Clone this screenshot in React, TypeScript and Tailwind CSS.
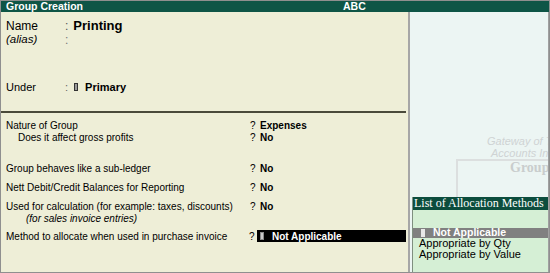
import React from 'react';

const Cursor: React.FC<{ className?: string }> = ({ className = '' }) => (
  <span className={`inline-block w-[4px] h-[8px] ${className}`} />
);

const rows = [
  { label: 'Group behaves like a sub-ledger', value: 'No', mt: 'mt-[19px]' },
  { label: 'Nett Debit/Credit Balances for Reporting', value: 'No', mt: 'mt-[7px]' },
];

const App: React.FC = () => {
  return (
    <div className="w-[550px] h-[273px] border border-[#8f8f8f] flex flex-col font-['Liberation_Sans',Arial,sans-serif] text-black overflow-hidden">
      {/* Title bar */}
      <div className="h-[11px] bg-[#0e5546] flex items-center text-white font-bold text-[10.5px] leading-[11px]">
        <span className="w-[342px] pl-[5px]">Group Creation</span>
        <span>ABC</span>
      </div>

      <div className="flex-1 flex min-h-0">
        {/* Left panel */}
        <div className="w-[407px] bg-[#eeeed7] flex flex-col">
          {/* Name */}
          <div className="mt-[7px] h-[13px] flex items-center pl-[5px]">
            <span className="w-[59px] text-[12px]">Name</span>
            <span className="text-[12px] text-[#555]">:</span>
            <span className="ml-[5px] text-[13px] font-bold">Printing</span>
          </div>
          <div className="mt-[2px] h-[12px] flex items-center pl-[5px]">
            <span className="w-[59px] text-[11.5px] italic">(alias)</span>
            <span className="text-[12px] text-[#777]">:</span>
          </div>

          {/* Under */}
          <div className="mt-[35px] h-[12px] flex items-center pl-[5px]">
            <span className="w-[59px] text-[11px]">Under</span>
            <span className="text-[11px] text-[#666]">:</span>
            <Cursor className="ml-[6px] border border-[#333] bg-[#9a9a9a]" />
            <span className="ml-[7px] text-[11px] font-bold">Primary</span>
          </div>

          <div className="mt-[18px] h-[2px] mr-[2px] bg-[#4a4a3a]" />

          {/* Nature of group */}
          <div className="mt-[6px] h-[12px] flex items-center pl-[5px] text-[10px]">
            <span className="w-[244px]">Nature of Group</span>
            <span className="w-[10px]">?</span>
            <span className="font-bold">Expenses</span>
          </div>
          <div className="h-[12px] flex items-center pl-[5px] text-[10px]">
            <span className="w-[244px] pl-[12px]">Does it affect gross profits</span>
            <span className="w-[10px]">?</span>
            <span className="font-bold">No</span>
          </div>

          {rows.map((r) => (
            <div key={r.label} className={`${r.mt} h-[12px] flex items-center pl-[5px] text-[10px]`}>
              <span className="w-[244px]">{r.label}</span>
              <span className="w-[10px]">?</span>
              <span className="font-bold">{r.value}</span>
            </div>
          ))}

          <div className="mt-[7px] h-[12px] flex items-center pl-[5px] text-[10px]">
            <span className="w-[244px]">Used for calculation (for example: taxes, discounts)</span>
            <span className="w-[10px]">?</span>
            <span className="font-bold">No</span>
          </div>
          <div className="h-[12px] flex items-center pl-[5px] text-[10px]">
            <span className="pl-[20px] italic">(for sales invoice entries)</span>
          </div>

          {/* Method */}
          <div className="mt-[6px] h-[12px] flex items-center pl-[5px] text-[10px]">
            <span className="w-[243px]">Method to allocate when used in purchase invoice</span>
            <span className="w-[8px]">?</span>
            <div className="w-[149px] h-[12px] bg-black flex items-center text-white font-bold">
              <Cursor className="ml-[3px] w-[3px] bg-[#c8c8c8] border border-[#888]" />
              <span className="ml-[8px]">Not Applicable</span>
            </div>
          </div>
        </div>

        {/* Divider */}
        <div className="w-[2px] bg-[#a6a6a6]" />

        {/* Right panel */}
        <div className="flex-1 bg-[#ecf5f3] flex flex-col border-r border-[#a0a0a0] overflow-hidden">
          <div className="mt-[123px] h-[12px] pl-[77px] whitespace-nowrap italic text-[11px] leading-[12px] text-[#cfd3d3]">
            Gateway of Tally
          </div>
          <div className="h-[12px] pl-[81px] whitespace-nowrap italic text-[11px] leading-[12px] text-[#cfd3d3]">
            Accounts Info.
          </div>
          <div className="ml-[46px] h-[38px] border-t-2 border-l-2 border-[#dcdfdf] pl-[52px] whitespace-nowrap font-['Liberation_Serif',serif] font-bold text-[14px] leading-[14px] text-[#c9cdcd]">
            Groups
          </div>

          {/* Allocation popup */}
          <div className="ml-[2px] flex-1 bg-[#d5efd5] flex flex-col border-l border-[#7f8f80]">
            <div className="h-[13px] bg-[#0c4d3d] text-white whitespace-nowrap font-['Liberation_Serif',serif] text-[12px] leading-[13px] pl-[1px]">
              List of Allocation Methods
            </div>
            <div className="h-[18px]" />
            <div className="h-[10px] bg-[#808080] flex items-center text-white font-bold text-[10.5px]">
              <Cursor className="ml-[8px] w-[3px] h-[7px] bg-[#e8e8e8]" />
              <span className="ml-[8px]">Not Applicable</span>
            </div>
            <div className="h-[11px] pl-[6px] text-[11px] leading-[11px]">Appropriate by Qty</div>
            <div className="h-[11px] pl-[6px] text-[11px] leading-[11px]">Appropriate by Value</div>
          </div>
        </div>
      </div>
    </div>
  );
};

export default App;
